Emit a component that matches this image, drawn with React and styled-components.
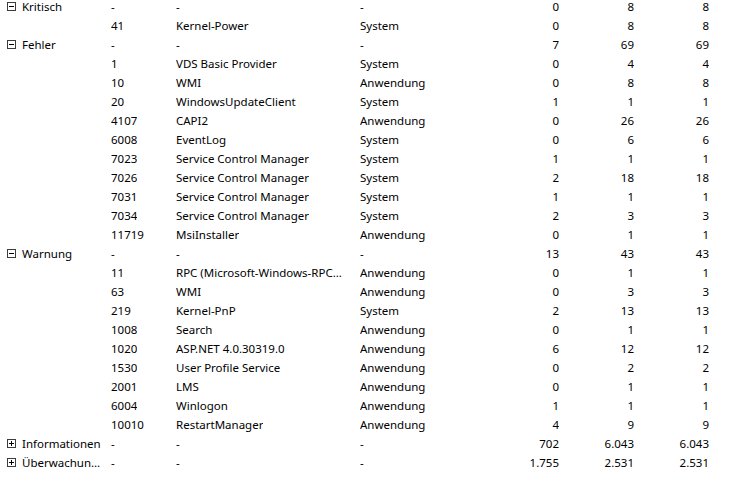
import React from 'react'
import styled, { createGlobalStyle } from 'styled-components'

const GlobalStyle = createGlobalStyle`
  html, body {
    margin: 0;
    padding: 0;
    background: #ffffff;
  }
  body {
    font-family: 'Segoe UI', 'Noto Sans', 'Open Sans', sans-serif;
    font-size: 11.5px;
    color: #000000;
    overflow: hidden;
  }
`

const Viewport = styled.div`
  width: 741px;
  height: 495px;
  overflow: hidden;
  background: #ffffff;
`

const Table = styled.div`
  margin-top: -3px;
  display: grid;
  grid-template-columns: 111px 65px 184px 124px 75px 75px 75px 1fr;
  grid-auto-rows: 19px;
`

const Cell = styled.div`
  display: flex;
  align-items: center;
  white-space: nowrap;
  overflow: hidden;
  min-width: 0;
  justify-content: ${p => (p.$num ? 'flex-end' : 'flex-start')};
  padding-right: ${p => (p.$num ? '0' : '16px')};
`

const Clip = styled.span`
  overflow: hidden;
  text-overflow: ellipsis;
  min-width: 0;
`

const TreeCell = styled(Cell)`
  padding-left: 7px;
  padding-right: 6px;
  gap: 6px;
`

const Spacer = styled.div``

function Expander({ open }) {
  return (
    <svg width="9" height="9" viewBox="0 0 9 9" style={{ flex: 'none' }}>
      <rect x="0.5" y="0.5" width="8" height="8" fill="#fff" stroke="#3c3c3c" />
      <line x1="2" y1="4.5" x2="7" y2="4.5" stroke="#000" />
      {!open && <line x1="4.5" y1="2" x2="4.5" y2="7" stroke="#000" />}
    </svg>
  )
}

const rows = [
  { level: 'Kritisch', open: true, id: '-', src: '-', log: '-', a: '0', b: '8', c: '8' },
  { id: '41', src: 'Kernel-Power', log: 'System', a: '0', b: '8', c: '8' },
  { level: 'Fehler', open: true, id: '-', src: '-', log: '-', a: '7', b: '69', c: '69' },
  { id: '1', src: 'VDS Basic Provider', log: 'System', a: '0', b: '4', c: '4' },
  { id: '10', src: 'WMI', log: 'Anwendung', a: '0', b: '8', c: '8' },
  { id: '20', src: 'WindowsUpdateClient', log: 'System', a: '1', b: '1', c: '1' },
  { id: '4107', src: 'CAPI2', log: 'Anwendung', a: '0', b: '26', c: '26' },
  { id: '6008', src: 'EventLog', log: 'System', a: '0', b: '6', c: '6' },
  { id: '7023', src: 'Service Control Manager', log: 'System', a: '1', b: '1', c: '1' },
  { id: '7026', src: 'Service Control Manager', log: 'System', a: '2', b: '18', c: '18' },
  { id: '7031', src: 'Service Control Manager', log: 'System', a: '1', b: '1', c: '1' },
  { id: '7034', src: 'Service Control Manager', log: 'System', a: '2', b: '3', c: '3' },
  { id: '11719', src: 'MsiInstaller', log: 'Anwendung', a: '0', b: '1', c: '1' },
  { level: 'Warnung', open: true, id: '-', src: '-', log: '-', a: '13', b: '43', c: '43' },
  { id: '11', src: 'RPC (Microsoft-Windows-RPC-Events)', log: 'Anwendung', a: '0', b: '1', c: '1' },
  { id: '63', src: 'WMI', log: 'Anwendung', a: '0', b: '3', c: '3' },
  { id: '219', src: 'Kernel-PnP', log: 'System', a: '2', b: '13', c: '13' },
  { id: '1008', src: 'Search', log: 'Anwendung', a: '0', b: '1', c: '1' },
  { id: '1020', src: 'ASP.NET 4.0.30319.0', log: 'Anwendung', a: '6', b: '12', c: '12' },
  { id: '1530', src: 'User Profile Service', log: 'Anwendung', a: '0', b: '2', c: '2' },
  { id: '2001', src: 'LMS', log: 'Anwendung', a: '0', b: '1', c: '1' },
  { id: '6004', src: 'Winlogon', log: 'Anwendung', a: '1', b: '1', c: '1' },
  { id: '10010', src: 'RestartManager', log: 'Anwendung', a: '4', b: '9', c: '9' },
  { level: 'Informationen', open: false, id: '-', src: '-', log: '-', a: '702', b: '6.043', c: '6.043' },
  { level: 'Überwachung erfolgreich', open: false, id: '-', src: '-', log: '-', a: '1.755', b: '2.531', c: '2.531' },
]

export default function App() {
  return (
    <Viewport>
      <GlobalStyle />
      <Table>
        {rows.map((r, i) => (
          <React.Fragment key={i}>
            {r.level ? (
              <TreeCell>
                <Expander open={r.open} />
                <Clip>{r.level}</Clip>
              </TreeCell>
            ) : (
              <Cell />
            )}
            <Cell><Clip>{r.id}</Clip></Cell>
            <Cell><Clip>{r.src}</Clip></Cell>
            <Cell><Clip>{r.log}</Clip></Cell>
            <Cell $num>{r.a}</Cell>
            <Cell $num>{r.b}</Cell>
            <Cell $num>{r.c}</Cell>
            <Spacer />
          </React.Fragment>
        ))}
      </Table>
    </Viewport>
  )
}
